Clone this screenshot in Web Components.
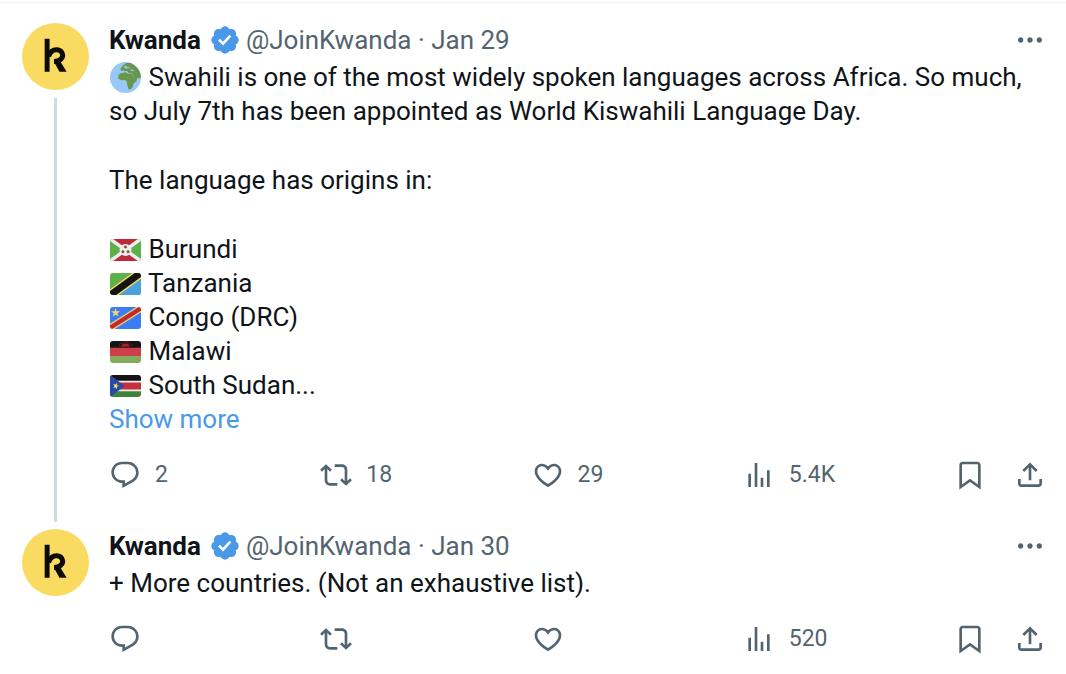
<!DOCTYPE html>
<html lang="en">
<head>
<meta charset="utf-8">
<meta name="viewport" content="width=device-width, initial-scale=1">
<title>Kwanda thread</title>
<style>
body { margin: 0; padding-top: 2px; background: #fff; color: #0f1419; font: 26px/34px Roboto, "Liberation Sans", sans-serif; }
a { color: #4a99e9; text-decoration: none; }
p { margin: 0 0 35px; }
p:last-child { margin-bottom: 0; }
ul { margin: 0; padding: 0; list-style: none; }
</style>
</head>
<body>
<post-thread>
  <thread-post threaded date="Jan 29" replies="2" reposts="18" likes="29" views="5.4K">
    <p><emoji-glyph name="globe"></emoji-glyph> Swahili is one of the most widely spoken languages across Africa. So much, so July 7th has been appointed as World Kiswahili Language Day.</p>
    <p>The language has origins in:</p>
    <ul>
      <li><emoji-glyph name="burundi"></emoji-glyph> Burundi</li>
      <li><emoji-glyph name="tanzania"></emoji-glyph> Tanzania</li>
      <li><emoji-glyph name="congo"></emoji-glyph> Congo (DRC)</li>
      <li><emoji-glyph name="malawi"></emoji-glyph> Malawi</li>
      <li><emoji-glyph name="southsudan"></emoji-glyph> South Sudan...</li>
    </ul>
    <a href="#more">Show more</a>
  </thread-post>
  <thread-post date="Jan 30" views="520">
    <p>+ More countries. (Not an exhaustive list).</p>
  </thread-post>
</post-thread>

<script>
const ICONS = {
  reply: 'M1.751 10c0-4.42 3.584-8 8.005-8h4.366c4.49 0 8.129 3.64 8.129 8.13 0 2.96-1.607 5.68-4.196 7.11l-8.054 4.46v-3.69h-.067c-4.49.1-8.183-3.51-8.183-8.01zm8.005-6c-3.317 0-6.005 2.69-6.005 6 0 3.37 2.77 6.08 6.138 6.01l.351-.01h1.761v2.3l5.087-2.81c1.951-1.08 3.163-3.13 3.163-5.36 0-3.39-2.744-6.13-6.129-6.13H9.756z',
  repost: 'M4.5 3.88l4.432 4.14-1.364 1.46L5.5 7.55V16c0 1.1.896 2 2 2H13v2H7.5c-2.209 0-4-1.79-4-4V7.55L1.432 9.48.068 8.02 4.5 3.88zM16.5 6H11V4h5.5c2.209 0 4 1.79 4 4v8.45l2.068-1.93 1.364 1.46-4.432 4.14-4.432-4.14 1.364-1.46 2.068 1.93V8c0-1.1-.896-2-2-2z',
  like: 'M16.697 5.5c-1.222-.06-2.679.51-3.89 2.16l-.805 1.09-.806-1.09C9.984 6.01 8.526 5.44 7.304 5.5c-1.243.07-2.349.78-2.91 1.91-.552 1.12-.633 2.78.479 4.82 1.074 1.97 3.257 4.27 7.129 6.61 3.87-2.34 6.052-4.64 7.126-6.61 1.111-2.04 1.03-3.7.477-4.82-.561-1.13-1.666-1.84-2.908-1.91zm4.187 7.69c-1.351 2.48-4.001 5.12-8.379 7.67l-.503.3-.504-.3c-4.379-2.55-7.029-5.19-8.382-7.67-1.36-2.5-1.41-4.86-.514-6.67.887-1.79 2.647-2.91 4.601-3.01 1.651-.09 3.368.56 4.798 2.01 1.429-1.45 3.146-2.1 4.796-2.01 1.954.1 3.714 1.22 4.601 3.01.896 1.81.846 4.17-.514 6.67z',
  views: 'M8.75 21V3h2v18h-2zM18 21V8.5h2V21h-2zM4 21l.004-10h2L6 21H4zm9.248 0v-7h2v7h-2z',
  bookmark: 'M4 4.5C4 3.12 5.119 2 6.5 2h11C18.881 2 20 3.12 20 4.5v18.44l-8-5.71-8 5.71V4.5zM6.5 4c-.276 0-.5.22-.5.5v14.56l6-4.29 6 4.29V4.5c0-.28-.224-.5-.5-.5h-11z',
  share: 'M12 2.59l5.7 5.7-1.41 1.42L13 6.41V16h-2V6.41l-3.3 3.3-1.41-1.42L12 2.59zM21 15l-.02 3.51c0 1.38-1.12 2.49-2.5 2.49H5.5C4.11 21 3 19.88 3 18.5V15h2v3.5c0 .28.22.5.5.5h12.98c.28 0 .5-.22.5-.5L19 15h2z',
  more: 'M3 12c0-1.1.9-2 2-2s2 .9 2 2-.9 2-2 2-2-.9-2-2zm9 2c1.1 0 2-.9 2-2s-.9-2-2-2-2 .9-2 2 .9 2 2 2zm7 0c1.1 0 2-.9 2-2s-.9-2-2-2-2 .9-2 2 .9 2 2 2z'
};

const EMOJI = {
  globe: ['0 0 36 36', '<circle cx="18" cy="18" r="18" fill="#97c8f8"/><path fill="#69974a" d="M12 8l3-4 4-2.800L24 1.200Q34 6 35.800 16L35 19.500 32.500 18 30 20.500 27.500 17 25.500 13 21.500 12.500 20 10.500 17.500 10.800 15.500 9.500 13 10.500z"/><path fill="#97c8f8" d="M16 5.500l2.500-1.500 1.500 2 3-.5-1 1.800-4 .5zM24 8.500l4 .8-1 1.500-3-.5z"/><path fill="#69974a" d="M12 13l6-1.200 2.500 1.500 5 .3 2.500 5 3.500.8-.8 2.600-3.700 3.500-.5 3.500-2.500 2.500-2.500 0-1.300-4.500-.7-4.500-2-1.500-4.500.2-3.500-2 0-3z"/>'],
  burundi: ['0 0 36 26', '<path fill="#5eb04a" d="M0 0h36v26H0z"/><path fill="#be2a37" d="M2 0h32L18 12zM2 26h32L18 14z"/><path stroke="#eee" stroke-width="4" d="M0 0l36 26M36 0L0 26"/><circle cx="18" cy="13" r="7" fill="#eee"/><g fill="#be2a37" stroke="#4b8b46" stroke-width=".6"><circle cx="18" cy="9.500" r="1.500"/><circle cx="15" cy="15" r="1.500"/><circle cx="21" cy="15" r="1.500"/></g>'],
  tanzania: ['0 0 36 26', '<path fill="#5eb04a" d="M0 0h36v26H0z"/><path fill="#4aa1db" d="M36 0v26H0z"/><path stroke="#f5d75e" stroke-width="11.500" d="M-4 29L40-3"/><path stroke="#141414" stroke-width="8" d="M-4 29L40-3"/>'],
  congo: ['0 0 36 26', '<path fill="#3a7df6" d="M0 0h36v26H0z"/><path stroke="#f5d75e" stroke-width="8" d="M-4 27L40-1"/><path stroke="#be2a33" stroke-width="5" d="M-4 27L40-1"/><path fill="#f5d75e" d="M6.500 1.500l1.300 3.700h4L8.600 7.600l1.200 3.800-3.300-2.300-3.300 2.300 1.200-3.800-3.200-2.400h4z"/>'],
  malawi: ['0 0 36 26', '<path fill="#141414" d="M0 0h36v9H0z"/><path fill="#ce3e4b" d="M0 8h36v10H0z"/><path fill="#83ad5c" d="M0 17.500h36V26H0z"/><path fill="#a3202c" d="M13 7a5 4 0 0 1 10 0z"/><path fill="none" stroke="#a3202c" stroke-width="1.200" stroke-dasharray="1 1" d="M10.500 7a7.500 5.500 0 0 1 15 0"/>'],
  southsudan: ['0 0 36 26', '<path fill="#141414" d="M0 0h36v8H0z"/><path fill="#eee" d="M0 7h36v12H0z"/><path fill="#c8313c" d="M0 9h36v8H0z"/><path fill="#3e853b" d="M0 19h36v7H0z"/><path fill="#2a4aa8" d="M0 0l17 13L0 26z"/><path fill="#f5d75e" d="M10.500 12.900L8 14l.3 2.700-1.900-2-2.600.6L5.100 13 3.800 10.700l2.600.6 1.900-2L8 12z"/>']
};

class EmojiGlyph extends HTMLElement {
  connectedCallback() {
    const [box, art] = EMOJI[this.getAttribute('name')];
    this.attachShadow({ mode: 'open' }).innerHTML = `
      <style>
        :host { display: inline-block; width: 31px; height: 22px; margin: 0 1px; vertical-align: -3px; }
        :host([name="globe"]) { height: 31px; vertical-align: -7px; }
        svg { display: block; width: 100%; height: 100%; border-radius: 3px; }
      </style>
      <svg viewBox="${box}" preserveAspectRatio="xMidYMid slice" role="img" aria-label="${this.getAttribute('name')}">${art}</svg>`;
  }
}

class LineIcon extends HTMLElement {
  connectedCallback() {
    this.attachShadow({ mode: 'open' }).innerHTML = `
      <style>:host { display: block; width: 32px; height: 32px; } svg { display: block; fill: currentColor; }</style>
      <svg viewBox="0 0 24 24" aria-hidden="true"><path d="${ICONS[this.getAttribute('name')]}"/></svg>`;
  }
}

class KwandaAvatar extends HTMLElement {
  connectedCallback() {
    this.attachShadow({ mode: 'open' }).innerHTML = `
      <style>:host { display: block; width: 67px; height: 67px; } svg { display: block; }</style>
      <svg viewBox="0 0 68 68" role="img" aria-label="Kwanda">
        <circle cx="34" cy="34" r="34" fill="#f9db62"/>
        <path fill="#0c0a05" d="M23 16h5v33.500h-5z"/>
        <path fill="none" stroke="#0c0a05" stroke-width="5" d="M27 34c1.500-4.500 4.500-7 8.500-6.800 5.500.3 7.500 6.500 4 9.500-1.500 1.400-4 2.300-7 2.300"/>
        <path fill="#0c0a05" d="M32.300 39l6-1 7 11.500h-7.300z"/>
      </svg>`;
  }
}

class VerifiedBadge extends HTMLElement {
  connectedCallback() {
    this.attachShadow({ mode: 'open' }).innerHTML = `
      <style>:host { display: block; width: 32px; height: 32px; } svg { display: block; fill: #4a99e9; }</style>
      <svg viewBox="0 0 22 22" role="img" aria-label="Verified account"><path d="M20.396 11c-.018-.646-.215-1.275-.57-1.816-.354-.54-.852-.972-1.438-1.246.223-.607.27-1.264.14-1.897-.131-.634-.437-1.218-.882-1.687-.47-.445-1.053-.75-1.687-.882-.633-.13-1.29-.083-1.897.14-.273-.587-.704-1.086-1.245-1.44S11.647 1.62 11 1.604c-.646.017-1.273.213-1.813.568s-.969.854-1.24 1.44c-.608-.223-1.267-.272-1.902-.14-.635.13-1.22.436-1.69.882-.445.47-.749 1.055-.878 1.688-.13.633-.08 1.29.144 1.896-.587.274-1.087.705-1.443 1.245-.356.54-.555 1.17-.574 1.817.02.647.218 1.276.574 1.817.356.54.856.972 1.443 1.245-.224.606-.274 1.263-.144 1.896.13.634.433 1.218.877 1.688.47.443 1.054.747 1.687.878.633.132 1.29.084 1.897-.136.274.586.705 1.084 1.246 1.439.54.354 1.17.551 1.816.569.647-.016 1.276-.213 1.817-.567s.972-.854 1.245-1.44c.604.239 1.266.296 1.903.164.636-.132 1.22-.447 1.68-.907.46-.46.776-1.044.908-1.681s.075-1.299-.165-1.903c.586-.274 1.084-.705 1.439-1.246.354-.54.551-1.17.569-1.816zM9.662 14.85l-3.429-3.428 1.293-1.302 2.072 2.072 4.4-4.794 1.347 1.246z"/></svg>`;
  }
}

class PostAction extends HTMLElement {
  connectedCallback() {
    const count = this.getAttribute('count') || '';
    this.attachShadow({ mode: 'open' }).innerHTML = `
      <style>
        :host { display: block; }
        button { display: flex; align-items: center; gap: 14px; padding: 0; border: 0; background: none; color: #536471; font: inherit; font-size: 23px; line-height: 34px; cursor: pointer; }
      </style>
      <button type="button" aria-label="${this.getAttribute('label')} ${count}"><line-icon name="${this.getAttribute('icon')}"></line-icon>${count ? `<span>${count}</span>` : ''}</button>`;
  }
}

class ThreadPost extends HTMLElement {
  connectedCallback() {
    const get = name => this.getAttribute(name) || '';
    this.attachShadow({ mode: 'open' }).innerHTML = `
      <style>
        :host { display: block; padding: 7px 20px 20px 22px; }
        :host([threaded]) { padding-top: 20px; padding-bottom: 0; }
        article { display: grid; grid-template-columns: 67px 1fr; gap: 20px; }
        aside { display: flex; flex-direction: column; align-items: center; gap: 8px; }
        .line { flex: 1; width: 3px; background: #cfd9de; }
        :host(:not([threaded])) .line { display: none; }
        :host([threaded]) .content { padding-bottom: 32px; }
        header { display: flex; align-items: center; height: 34px; margin-bottom: 3px; color: #536471; }
        header a { color: inherit; text-decoration: none; }
        header .name { color: #0f1419; font-weight: 700; }
        verified-badge { margin: 0 5px 0 8px; }
        header post-action { margin-left: auto; }
        footer { display: grid; grid-template-columns: repeat(4, 1fr) auto; align-items: center; height: 32px; margin-top: 22px; }
        .end { display: flex; gap: 28px; }
      </style>
      <article>
        <aside><kwanda-avatar></kwanda-avatar><div class="line"></div></aside>
        <div class="content">
          <header>
            <a class="name" href="#kwanda">Kwanda</a><verified-badge></verified-badge>
            <a href="#kwanda">@JoinKwanda</a><span>&nbsp;·&nbsp;</span><a href="#post">${get('date')}</a>
            <post-action icon="more" label="More"></post-action>
          </header>
          <slot></slot>
          <footer>
            <post-action icon="reply" label="Reply" count="${get('replies')}"></post-action>
            <post-action icon="repost" label="Repost" count="${get('reposts')}"></post-action>
            <post-action icon="like" label="Like" count="${get('likes')}"></post-action>
            <post-action icon="views" label="Views" count="${get('views')}"></post-action>
            <div class="end">
              <post-action icon="bookmark" label="Bookmark"></post-action>
              <post-action icon="share" label="Share"></post-action>
            </div>
          </footer>
        </div>
      </article>`;
  }
}

class PostThread extends HTMLElement {
  connectedCallback() {
    this.attachShadow({ mode: 'open' }).innerHTML = `
      <style>:host { display: block; border-top: 1px solid #eff3f4; }</style><slot></slot>`;
  }
}

customElements.define('emoji-glyph', EmojiGlyph);
customElements.define('line-icon', LineIcon);
customElements.define('kwanda-avatar', KwandaAvatar);
customElements.define('verified-badge', VerifiedBadge);
customElements.define('post-action', PostAction);
customElements.define('thread-post', ThreadPost);
customElements.define('post-thread', PostThread);
</script>
</body>
</html>
